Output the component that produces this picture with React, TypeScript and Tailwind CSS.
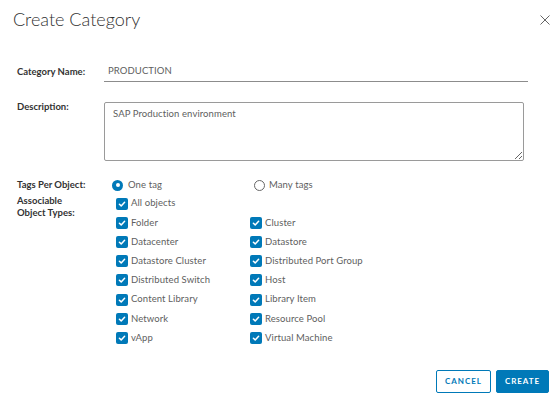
import React from "react";

const Check = () => (
  <span className="flex h-[12px] w-[12px] shrink-0 items-center justify-center rounded-[2px] bg-[#0079b8]">
    <svg width="8" height="8" viewBox="0 0 8 8" fill="none">
      <path d="M1.4 4.2 L3.2 5.9 L6.6 2.2" stroke="white" strokeWidth="1.5" strokeLinecap="round" strokeLinejoin="round" />
    </svg>
  </span>
);

const CheckItem = ({ label }: { label: string }) => (
  <div className="flex h-[19.2px] items-center gap-[3px]">
    <Check />
    <span className="text-[9.5px] tracking-[0.01em] text-[#5e5e5e]">{label}</span>
  </div>
);

const left = ["Folder", "Datacenter", "Datastore Cluster", "Distributed Switch", "Content Library", "Network", "vApp"];
const right = ["Cluster", "Datastore", "Distributed Port Group", "Host", "Library Item", "Resource Pool", "Virtual Machine"];

export default function App() {
  return (
    <div
      className="relative h-[403px] w-[557px] overflow-hidden bg-white text-[#333]"
      style={{ fontFamily: "Lato, 'Open Sans', sans-serif" }}
    >
      <div className="flex items-start justify-between pl-[13px] pr-[7px] pt-[7px]">
        <h1 className="h-[24px] text-[18px] font-light leading-[24px] text-[#313131]">Create Category</h1>
        <svg width="10" height="10" viewBox="0 0 10 10" className="mt-[8px]">
          <path d="M0.5 0.5 L9.5 9.5 M9.5 0.5 L0.5 9.5" stroke="#666" strokeWidth="1" />
        </svg>
      </div>

      <div className="pl-[17px]">
        <div className="mt-[31px] flex h-[20px] items-center">
          <label className="w-[87px] text-[9.5px] font-bold text-[#333]">Category Name:</label>
          <div className="flex h-[20px] w-[424px] items-center border-b border-[#8c8c8c] pl-[4px]">
            <span className="text-[9.5px] tracking-[0.01em] text-[#5e5e5e]">PRODUCTION</span>
          </div>
        </div>

        <div className="mt-[20px] flex items-start">
          <label className="-mt-[2px] w-[87px] text-[9.5px] font-bold leading-[14px] text-[#333]">Description:</label>
          <textarea
            defaultValue="SAP Production environment"
            className="h-[59px] w-[420px] rounded-[2px] border border-[#9a9a9a] px-[8px] pt-[4px] text-[9.5px] leading-[14px] tracking-[0.01em] text-[#5e5e5e] outline-none"
            style={{ fontFamily: "Lato, 'Open Sans', sans-serif" }}
          />
        </div>

        <div className="mt-[17px] flex h-[14px] items-center">
          <label className="w-[95px] text-[9.5px] font-bold text-[#333]">Tags Per Object:</label>
          <div className="flex w-[142px] items-center gap-[5px]">
            <span className="flex h-[11px] w-[11px] items-center justify-center rounded-full bg-[#0079b8]">
              <span className="h-[4px] w-[4px] rounded-full bg-white" />
            </span>
            <span className="text-[9.5px] tracking-[0.01em] text-[#5e5e5e]">One tag</span>
          </div>
          <div className="flex items-center gap-[4px]">
            <span className="h-[11px] w-[11px] rounded-full border border-[#666]" />
            <span className="text-[9.5px] tracking-[0.01em] text-[#5e5e5e]">Many tags</span>
          </div>
        </div>

        <div className="mt-[2px] flex items-start">
          <label className="w-[99px] pt-[1px] text-[9.5px] font-bold leading-[12px] text-[#333]">
            Associable
            <br />
            Object Types:
          </label>
          <div className="flex flex-col">
            <CheckItem label="All objects" />
            <div className="flex">
              <div className="flex w-[134px] flex-col">
                {left.map((l) => (
                  <CheckItem key={l} label={l} />
                ))}
              </div>
              <div className="flex flex-col">
                {right.map((l) => (
                  <CheckItem key={l} label={l} />
                ))}
              </div>
            </div>
          </div>
        </div>
      </div>

      <div className="mt-[22px] flex justify-end gap-[5px] pr-[8px]">
        <button className="h-[23px] w-[55px] rounded-[2px] border border-[#0079b8] bg-white text-[8px] font-bold tracking-[0.12em] text-[#0079b8]">
          CANCEL
        </button>
        <button className="h-[23px] w-[53px] rounded-[2px] border border-[#0079b8] bg-[#0079b8] text-[8px] font-bold tracking-[0.12em] text-white">
          CREATE
        </button>
      </div>
    </div>
  );
}
